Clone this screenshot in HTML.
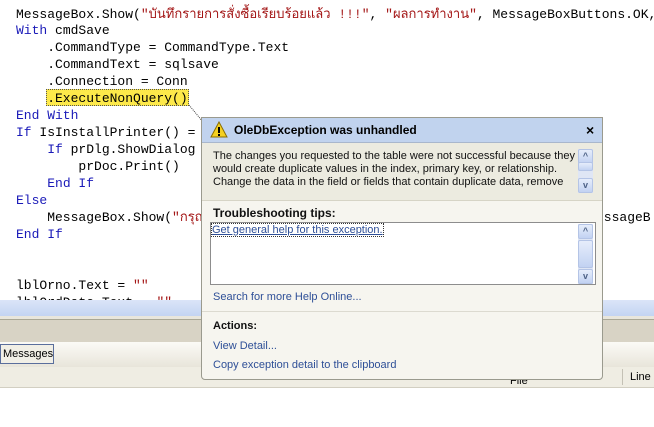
<!DOCTYPE html>
<html><head><style>
body{margin:0;width:654px;height:427px;overflow:hidden;background:#fff;position:relative;font-family:"Liberation Sans",sans-serif}
.c{position:absolute;font-family:"Liberation Mono","Noto Sans CJK SC",monospace;font-size:13px;line-height:17px;white-space:pre;color:#000}
.k{color:#1a1ab8}.s{color:#a31515}
.t{position:absolute;font-family:"Liberation Sans",sans-serif;font-size:11px;white-space:nowrap}
.sb{position:absolute;width:15px;background:#dfe6f5;}
.btn{position:absolute;left:0;width:15px;height:15px;background:linear-gradient(#e6edfb,#c2d2f2);border:1px solid #b4c4e6;box-sizing:border-box;border-radius:2px;color:#4d6185;font-size:9px;text-align:center;line-height:13px;font-weight:bold}
</style></head><body>
<div class="c" style="left:16px;top:6px">MessageBox.Show(<span class="s">"บันทึกรายการสั่งซื้อเรียบร้อยแล้ว !!!"</span>, <span class="s">"ผลการทำงาน"</span>, MessageBoxButtons.OK,</div>
<div class="c" style="left:16px;top:22px"><span class="k">With</span> cmdSave</div>
<div class="c" style="left:16px;top:39px">    .CommandType = CommandType.Text</div>
<div class="c" style="left:16px;top:56px">    .CommandText = sqlsave</div>
<div class="c" style="left:16px;top:73px">    .Connection = Conn</div>
<div style="position:absolute;left:46px;top:89px;width:143px;height:17px;background:#fde94a;border:1px dotted #555;box-sizing:border-box"></div>
<div class="c" style="left:16px;top:90px">    .ExecuteNonQuery()</div>
<div class="c" style="left:16px;top:107px"><span class="k">End With</span></div>
<div class="c" style="left:16px;top:124px"><span class="k">If</span> IsInstallPrinter() =</div>
<div class="c" style="left:16px;top:141px">    <span class="k">If</span> prDlg.ShowDialog</div>
<div class="c" style="left:16px;top:158px">        prDoc.Print()</div>
<div class="c" style="left:16px;top:175px">    <span class="k">End If</span></div>
<div class="c" style="left:16px;top:192px"><span class="k">Else</span></div>
<div class="c" style="left:16px;top:209px">    MessageBox.Show(<span class="s">"กรุณ</span></div>
<div class="c" style="left:596px;top:209px">essageB</div>
<div class="c" style="left:16px;top:226px"><span class="k">End If</span></div>
<div class="c" style="left:16px;top:277px">lblOrno.Text = <span class="s">""</span></div>
<div class="c" style="left:16px;top:294px;height:6px;overflow:hidden">lblOrdDate.Text = <span class="s">""</span></div>
<svg style="position:absolute;left:0;top:0" width="654" height="427"><line x1="189" y1="105" x2="208" y2="128" stroke="#444" stroke-dasharray="1,1"/></svg>
<!-- bottom panels -->
<div style="position:absolute;left:0;top:300px;width:654px;height:16px;background:linear-gradient(#dbe5f8,#c3d4f2)"></div>
<div style="position:absolute;left:0;top:316px;width:654px;height:3px;background:#e8e6dc;border-bottom:1px solid #a9a795"></div>
<div style="position:absolute;left:0;top:320px;width:654px;height:22px;background:#d8d3c5"></div>
<div style="position:absolute;left:0;top:342px;width:654px;height:25px;background:linear-gradient(#fbfaf6,#e8e5da)"></div>
<div style="position:absolute;left:0;top:344px;width:54px;height:20px;background:#f1efe6;border:1px solid #5a6e9c;box-sizing:border-box"></div>
<div class="t" style="left:3px;top:348px;color:#000">Messages</div>
<div style="position:absolute;left:0;top:367px;width:654px;height:20px;background:#efede3;border-bottom:1px solid #d2cfc2"></div>
<div style="position:absolute;left:622px;top:369px;width:1px;height:16px;background:#c4c1b5"></div>
<div class="t" style="left:630px;top:371px">Line</div>
<div class="t" style="left:510px;top:375px">File</div>
<!-- dialog -->
<div style="position:absolute;left:201px;top:117px;width:402px;height:263px;background:#f6f5ef;border:1px solid #9a9a8e;box-sizing:border-box;border-radius:0 0 4px 4px;overflow:hidden">
 <div style="position:absolute;left:0;top:0;width:400px;height:24px;background:#c1d3ee;border-bottom:1px solid #a9b7cc"></div>
 <svg style="position:absolute;left:8px;top:3px" width="18" height="17"><path d="M9 1 L17 16 L1 16 Z" fill="#f5d020" stroke="#8a6d00" stroke-width="1"/><rect x="8" y="6" width="2" height="6" fill="#000"/><rect x="8" y="13" width="2" height="2" fill="#000"/></svg>
 <div class="t" style="left:32px;top:5px;font-size:12px;font-weight:bold;color:#000">OleDbException was unhandled</div>
 <div class="t" style="left:384px;top:4px;font-size:14px;font-weight:bold">×</div>
 <div style="position:absolute;left:0;top:25px;width:400px;height:57px;background:#ecebe0;border-bottom:1px solid #d6d4c6"></div>
 <div class="t" style="left:11px;top:32px;line-height:13px;color:#111">The changes you requested to the table were not successful because they<br>would create duplicate values in the index, primary key, or relationship.<br>Change the data in the field or fields that contain duplicate data, remove</div>
 <div class="sb" style="left:376px;top:31px;height:44px"><div class="btn" style="top:0">^</div><div class="btn" style="top:13px;height:9px"></div><div class="btn" style="top:29px">v</div></div>
 <div class="t" style="left:11px;top:88px;font-size:12px;font-weight:bold;color:#111">Troubleshooting tips:</div>
 <div style="position:absolute;left:8px;top:104px;width:386px;height:63px;background:#fff;border:1px solid #8d8d8d;box-sizing:border-box"></div>
 <div class="t" style="left:10px;top:106px;color:#2e4f97;text-decoration:underline;outline:1px dotted #333">Get general help for this exception.</div>
 <div class="sb" style="left:376px;top:106px;height:60px"><div class="btn" style="top:0">^</div><div class="btn" style="top:16px;height:28px"></div><div class="btn" style="top:45px">v</div></div>
 <div class="t" style="left:11px;top:173px;color:#2e4f97">Search for more Help Online...</div>
 <div style="position:absolute;left:0;top:193px;width:400px;height:1px;background:#dcdad0"></div>
 <div class="t" style="left:11px;top:202px;font-weight:bold;color:#111">Actions:</div>
 <div class="t" style="left:11px;top:222px;color:#2e4f97">View Detail...</div>
 <div class="t" style="left:11px;top:241px;color:#2e4f97">Copy exception detail to the clipboard</div>
</div>
</body></html>
